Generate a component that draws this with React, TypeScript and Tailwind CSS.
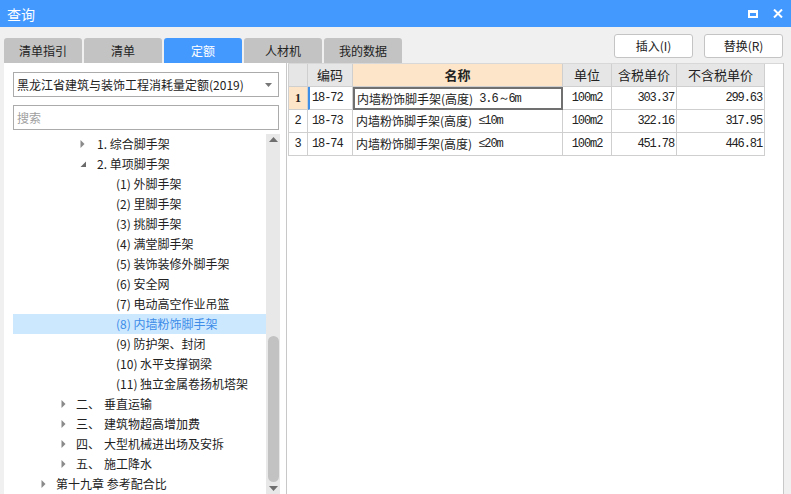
import React from "react";

const triRight = (
  <svg width="6" height="10" viewBox="0 0 6 10">
    <polygon points="0.5,1 4.5,5 0.5,9" fill="#8a8a8a" />
  </svg>
);
const triDown = (
  <svg width="7" height="7" viewBox="0 0 7 7">
    <polygon points="6,0.5 6,6 0.5,6" fill="#6a6a6a" />
  </svg>
);

type Row = { kind: "A" | "B" | "C" | "D"; tri?: "r" | "d"; a: string; b?: string; sel?: boolean };

const rows: Row[] = [
  { kind: "C", tri: "r", a: "1. 综合脚手架" },
  { kind: "C", tri: "d", a: "2. 单项脚手架" },
  { kind: "D", a: "(1) 外脚手架" },
  { kind: "D", a: "(2) 里脚手架" },
  { kind: "D", a: "(3) 挑脚手架" },
  { kind: "D", a: "(4) 满堂脚手架" },
  { kind: "D", a: "(5) 装饰装修外脚手架" },
  { kind: "D", a: "(6) 安全网" },
  { kind: "D", a: "(7) 电动高空作业吊篮" },
  { kind: "D", a: "(8) 内墙粉饰脚手架", sel: true },
  { kind: "D", a: "(9) 防护架、封闭" },
  { kind: "D", a: "(10) 水平支撑钢梁" },
  { kind: "D", a: "(11) 独立金属卷扬机塔架" },
  { kind: "B", tri: "r", a: "二、", b: "垂直运输" },
  { kind: "B", tri: "r", a: "三、", b: "建筑物超高增加费" },
  { kind: "B", tri: "r", a: "四、", b: "大型机械进出场及安拆" },
  { kind: "B", tri: "r", a: "五、", b: "施工降水" },
  { kind: "A", tri: "r", a: "第十九章 参考配合比" },
];

function TreeRow({ r }: { r: Row }) {
  const base = r.sel
    ? "h-[20px] flex items-center bg-[#cce8ff] text-[#3d8ce8]"
    : "h-[20px] flex items-center text-[#222]";
  const pad =
    r.kind === "A" ? "pl-[28px]" : r.kind === "B" ? "pl-[48px]" : r.kind === "C" ? "pl-[67px]" : "pl-[103px]";
  const triBox = r.kind === "C" ? "w-[17px] flex items-center" : "w-[15px] flex items-center";
  return (
    <div className={`${base} ${pad}`}>
      {r.tri && <span className={triBox}>{r.tri === "r" ? triRight : triDown}</span>}
      {r.b ? (
        <>
          <span className="w-[28px]">{r.a}</span>
          <span>{r.b}</span>
        </>
      ) : (
        <span className="whitespace-pre">{r.a}</span>
      )}
    </div>
  );
}

const MONO = "font-['Liberation_Mono',monospace] text-[12px] tracking-[-1.1px]";

type Data = { n: string; code: string; cn: string; tail: string; unit: string; tax: string; notax: string };
const data: Data[] = [
  { n: "1", code: "18-72", cn: "内墙粉饰脚手架(高度)", tail: "3.6～6m", unit: "100m2", tax: "303.37", notax: "299.63" },
  { n: "2", code: "18-73", cn: "内墙粉饰脚手架(高度)", tail: "≤10m", unit: "100m2", tax: "322.16", notax: "317.95" },
  { n: "3", code: "18-74", cn: "内墙粉饰脚手架(高度)", tail: "≤20m", unit: "100m2", tax: "451.78", notax: "446.81" },
];

export default function App() {
  return (
    <div className="w-[791px] h-[494px] overflow-hidden bg-[#f0f0f0] font-['Noto_Sans_CJK_SC',sans-serif] text-[12px] text-[#222] flex flex-col">
      {/* title bar */}
      <div className="h-[27px] shrink-0 bg-[#4499ff] flex items-center justify-between pl-[7px] pr-[8px]">
        <span className="text-white text-[14px] leading-none">查询</span>
        <div className="flex items-center gap-[15px]">
          <svg width="10" height="8" viewBox="0 0 10 8">
            <rect x="1" y="1.5" width="8" height="5.5" fill="none" stroke="white" strokeWidth="2" />
            <rect x="0" y="0" width="10" height="3" fill="white" />
          </svg>
          <svg width="10" height="9" viewBox="0 0 10 9">
            <path d="M1 0.5 L9 8.5 M9 0.5 L1 8.5" stroke="white" strokeWidth="2" />
          </svg>
        </div>
      </div>

      {/* tab strip + buttons */}
      <div className="h-[36px] shrink-0 flex justify-between items-start">
        <div className="flex gap-[2px] pl-[4px] mt-[11px]">
          <div className="w-[78px] h-[25px] rounded-t-[3px] bg-[#c3c3c3] flex items-center justify-center text-[#222]">清单指引</div>
          <div className="w-[78px] h-[25px] rounded-t-[3px] bg-[#c3c3c3] flex items-center justify-center text-[#222]">清单</div>
          <div className="w-[78px] h-[25px] rounded-t-[3px] bg-[#4499ff] flex items-center justify-center text-white">定额</div>
          <div className="w-[78px] h-[25px] rounded-t-[3px] bg-[#c3c3c3] flex items-center justify-center text-[#222]">人材机</div>
          <div className="w-[78px] h-[25px] rounded-t-[3px] bg-[#c3c3c3] flex items-center justify-center text-[#222]">我的数据</div>
        </div>
        <div className="flex gap-[11px] pr-[8px] mt-[7px]">
          <div className="w-[79px] h-[24px] rounded-[3px] border border-[#c4c4c4] bg-white flex items-center justify-center">插入(I)</div>
          <div className="w-[79px] h-[24px] rounded-[3px] border border-[#c4c4c4] bg-white flex items-center justify-center">替换(R)</div>
        </div>
      </div>

      {/* content */}
      <div className="flex-1 min-h-0 flex pl-[4px] pr-[7px]">
        {/* left panel */}
        <div className="w-[282px] shrink-0 bg-white flex flex-col pt-[9px] pl-[9px] pr-[6px]">
          <div className="h-[25px] w-[266px] border border-[#ababab] flex items-center justify-between pl-[3px] pr-[6px]">
            <span>黑龙江省建筑与装饰工程消耗量定额(2019)</span>
            <svg width="7" height="4" viewBox="0 0 7 4">
              <polygon points="0,0 7,0 3.5,4" fill="#777" />
            </svg>
          </div>
          <div className="h-[25px] w-[266px] mt-[8px] border border-[#ababab] flex items-center pl-[3px] text-[#a0a0a0]">搜索</div>
          <div className="flex-1 min-h-0 flex mt-[4px]">
            <div className="w-[253px] flex flex-col">
              {rows.map((r, i) => (
                <TreeRow key={i} r={r} />
              ))}
            </div>
            <div className="w-[14px] bg-[#e8e8e8] flex flex-col items-center">
              <div className="h-[12px] flex items-center">
                <svg width="9" height="5" viewBox="0 0 9 5">
                  <polygon points="0,5 9,5 4.5,0" fill="#6e6e6e" />
                </svg>
              </div>
              <div className="h-[191px]" />
              <div className="w-[11px] h-[147px] rounded-full bg-[#c2c2c2]" />
              <div className="h-[12px] flex items-center">
                <svg width="9" height="5" viewBox="0 0 9 5">
                  <polygon points="0,0 9,0 4.5,5" fill="#6e6e6e" />
                </svg>
              </div>
            </div>
          </div>
        </div>

        {/* right panel */}
        <div className="flex-1 bg-white border-l border-r border-[#c8c8c8] pl-[1px]">
          <div className="flex h-[24px] border-t border-[#d8d8d8]">
            <div className="w-[20px] bg-[#e6e6e6] border-r border-b border-l border-[#cfcfcf]" />
            <div className="w-[45px] bg-[#e6e6e6] border-r border-b border-[#cfcfcf] flex items-center justify-center text-[13px]">编码</div>
            <div className="w-[210px] bg-[#fde5c9] border-r border-b border-[#cfcfcf] flex items-center justify-center font-bold text-[13px]">名称</div>
            <div className="w-[49px] bg-[#e6e6e6] border-r border-b border-[#cfcfcf] flex items-center justify-center text-[13px]">单位</div>
            <div className="w-[65px] bg-[#e6e6e6] border-r border-b border-[#cfcfcf] flex items-center justify-center text-[13px]">含税单价</div>
            <div className="w-[88px] bg-[#e6e6e6] border-r border-b border-[#cfcfcf] flex items-center justify-center text-[13px]">不含税单价</div>
          </div>
          {data.map((d, i) => (
            <div key={i} className="flex h-[23px]">
              {i === 0 ? (
                <div className="w-[20px] bg-[#fde5c9] border-r border-b border-l border-[#cfcfcf] flex items-center justify-center font-['Liberation_Serif',serif] font-bold text-[12px]">
                  {d.n}
                </div>
              ) : (
                <div className="w-[20px] border-r border-b border-l border-[#cfcfcf] flex items-center justify-center font-['Liberation_Mono',monospace] text-[12px]">
                  {d.n}
                </div>
              )}
              <div
                className={
                  i === 0
                    ? "w-[45px] border-r border-b border-[#cfcfcf] border-l-2 border-l-[#3f8fe8] flex items-center pl-[2px]"
                    : "w-[45px] border-r border-b border-[#cfcfcf] flex items-center pl-[4px]"
                }
              >
                <span className={MONO}>{d.code}</span>
              </div>
              <div
                className={
                  i === 0
                    ? "w-[210px] border-2 border-[#707070] flex items-center pl-[2px] whitespace-pre"
                    : "w-[210px] border-r border-b border-[#cfcfcf] flex items-center pl-[3px] whitespace-pre"
                }
              >
                <span>{d.cn}</span>
                <span className={MONO}> {d.tail}</span>
              </div>
              <div className="w-[49px] border-r border-b border-[#cfcfcf] flex items-center justify-center">
                <span className={MONO}>{d.unit}</span>
              </div>
              <div className="w-[65px] border-r border-b border-[#cfcfcf] flex items-center justify-end pr-[2px]">
                <span className={MONO}>{d.tax}</span>
              </div>
              <div className="w-[88px] border-r border-b border-[#cfcfcf] flex items-center justify-end pr-[2px]">
                <span className={MONO}>{d.notax}</span>
              </div>
            </div>
          ))}
        </div>
      </div>
    </div>
  );
}
